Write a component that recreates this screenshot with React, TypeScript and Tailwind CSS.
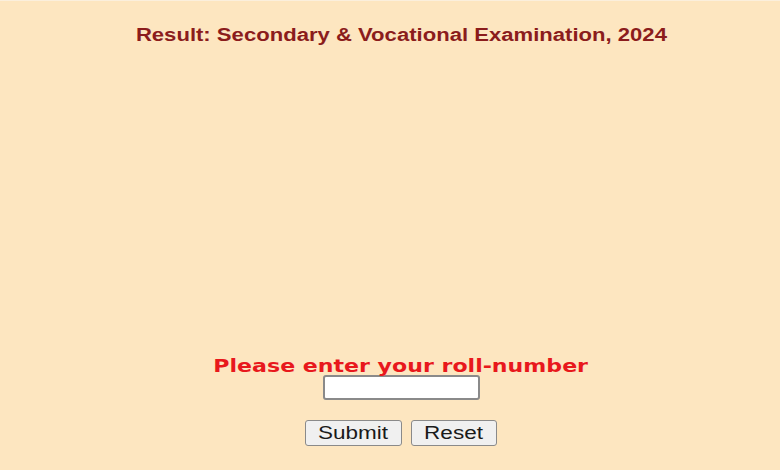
export default function App() {
  return (
    <div className="w-[780px] h-[470px] bg-[#fde6c0] border-t border-[#fbefdc] flex flex-col items-center pl-[22px] overflow-hidden">
      <h1 className="mt-[23px] text-[18px] leading-[22px] font-bold text-[#8b1c1c] scale-x-[1.227] [font-family:'Liberation_Sans',Arial,sans-serif]">
        Result: Secondary &amp; Vocational Examination, 2024
      </h1>
      <div className="mt-[310px] text-[18px] leading-[20px] font-bold text-[#e8181c] scale-x-[1.227] [font-family:'DejaVu_Sans',Verdana,sans-serif]">
        Please enter your roll-number
      </div>
      <input
        type="text"
        className="-mt-[1px] w-[157px] h-[25px] bg-white border-2 border-[#8a8a8a] rounded-[3px] outline-none"
      />
      <div className="mt-[20px] flex gap-[9px]">
        <button className="w-[97px] h-[26px] bg-[#f0f0f0] border border-[#8a8a8a] rounded-[3px] text-[18px] leading-[22px] text-[#1a1a1a] [font-family:'Liberation_Sans',Arial,sans-serif]">
          <span className="inline-block scale-x-[1.25]">Submit</span>
        </button>
        <button className="w-[86px] h-[26px] bg-[#f0f0f0] border border-[#8a8a8a] rounded-[3px] text-[18px] leading-[22px] text-[#1a1a1a] [font-family:'Liberation_Sans',Arial,sans-serif]">
          <span className="inline-block scale-x-[1.25]">Reset</span>
        </button>
      </div>
    </div>
  );
}
